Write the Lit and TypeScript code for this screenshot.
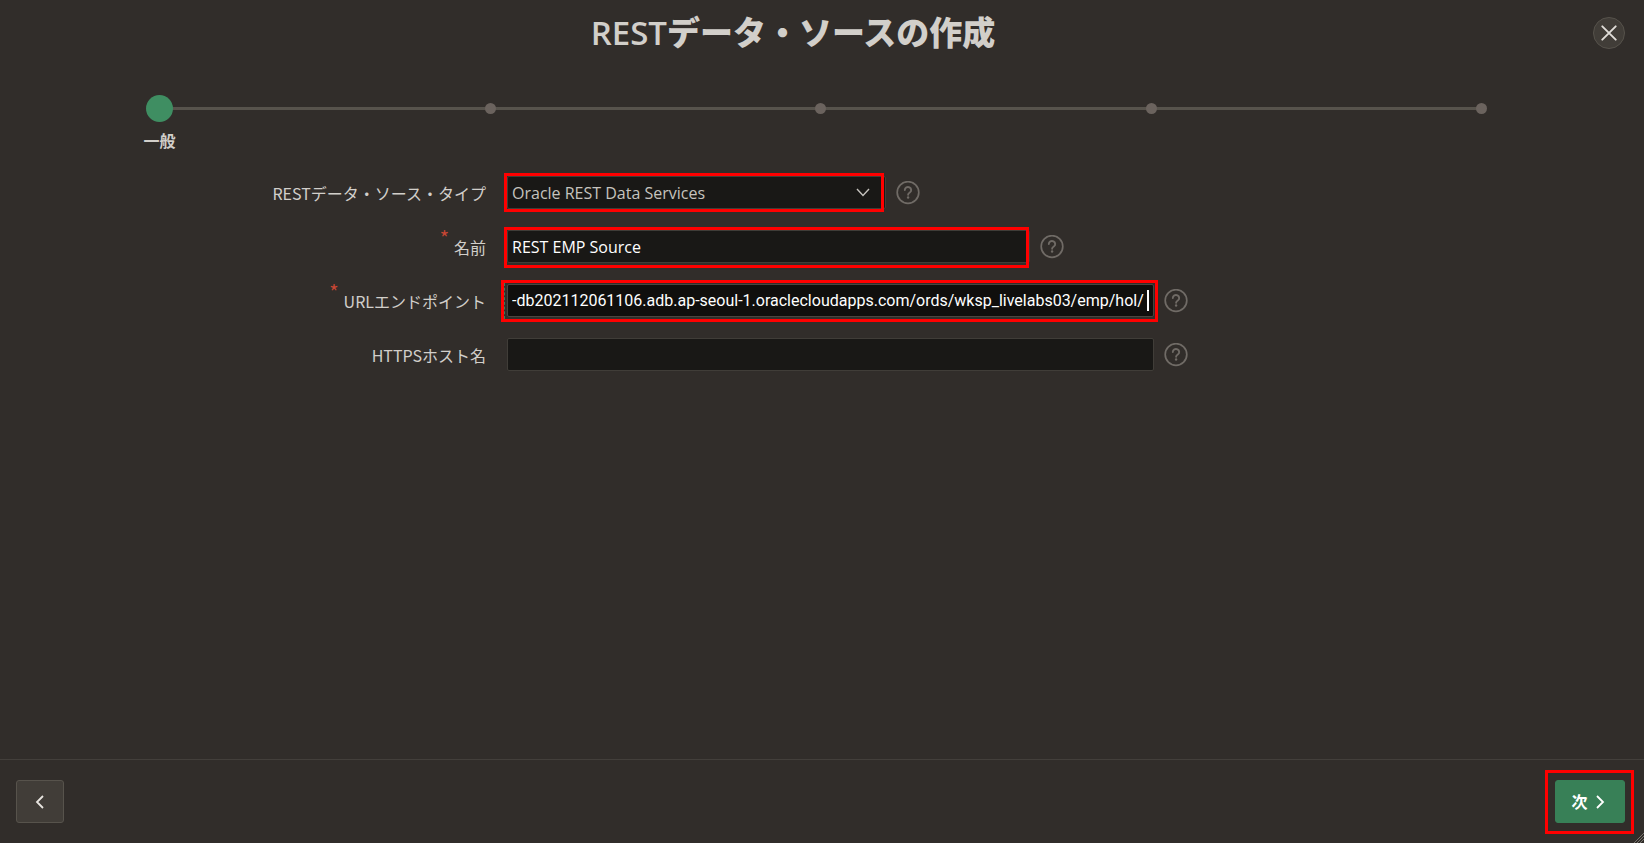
import { LitElement, html, css } from "lit";
import { customElement } from "lit/decorators.js";

@customElement("help-button")
class HelpButton extends LitElement {
  static styles = css`
    :host { display: block; flex: none; }
    .help { display: block; width: 24px; height: 24px; padding: 0; border: 0; background: none; color: #706b66; cursor: pointer; }
    .icon { display: block; }
  `;
  render() {
    return html`<button class="help" type="button" aria-label="ヘルプ">
      <svg class="icon" width="24" height="24" viewBox="0 0 24 24" fill="none" stroke="currentColor">
        <circle cx="12" cy="11.5" r="10.8" stroke-width="1.7" />
        <path d="M8.8 9a3.2 3 0 1 1 5 2.5c-1.1.7-1.7 1.1-1.7 2.3" stroke-width="1.9" stroke-linecap="round" />
        <circle cx="12.1" cy="16.5" r="1.2" fill="currentColor" stroke="none" />
      </svg>
    </button>`;
  }
}

@customElement("step-train")
class StepTrain extends LitElement {
  static styles = css`
    :host { display: block; }
    .train {
      display: flex; justify-content: space-between; margin: 0 149px 0 146px; padding: 0; list-style: none; height: 27px;
      background: linear-gradient(#57534c, #57534c) center / calc(100% - 27px) 3px no-repeat;
    }
    .step { display: grid; place-items: center; width: 27px; }
    .dot { width: 11px; height: 11px; border-radius: 50%; background: #6b635e; }
    .current { width: 27px; height: 27px; background: #3f8e62; }
    .label { width: 319px; margin-top: 7px; text-align: center; font-weight: 700; line-height: 24px; }
  `;
  render() {
    return html`<ol class="train">
        <li class="step" aria-current="step"><span class="dot current"></span></li>
        ${[1, 2, 3, 4].map(() => html`<li class="step"><span class="dot"></span></li>`)}
      </ol>
      <div class="label">一般</div>`;
  }
}

@customElement("app-root")
class AppRoot extends LitElement {
  static styles = css`
    :host {
      display: flex; flex-direction: column; min-height: 100vh; box-sizing: border-box; position: relative;
      background: #312d2a; color: #d2cfca;
      font-family: "Open Sans", "Noto Sans CJK JP", sans-serif; font-size: 16px; line-height: 24px;
    }
    .header { display: flex; align-items: center; gap: 23px; padding: 9px 19px 0 16px; height: 48px; }
    .title { flex: 1; margin: 0; text-align: center; font-size: 33px; line-height: 40px; font-weight: 900; }
    .latin { font-weight: 600; }
    .close { flex: none; display: grid; place-items: center; width: 32px; height: 32px; padding: 0; border: 1px solid #56524b; border-radius: 50%; background: #413d38; color: #e0ddd8; }
    .train { margin-top: 38px; }
    .form { display: grid; gap: 21px; margin-top: 23px; flex: 1; align-content: start; }
    .row { display: grid; grid-template-columns: 486px 1fr; column-gap: 21px; align-items: center; }
    .caption { justify-self: end; display: flex; font-family: "Noto Sans CJK JP", sans-serif; }
    .required { color: #c74634; margin: -9px 5px 0 0; font-size: 20px; }
    .cell { display: flex; align-items: center; gap: 10px; }
    .field { position: relative; display: flex; color: #fff; }
    .control { box-sizing: border-box; width: 100%; height: 33px; padding: 0 4px; border: 1px solid #403d38; border-radius: 2px; background: #191816; color: #fff; font: inherit; appearance: none; outline: 0; }
    .choice { width: 379px; color: #c6c3be; }
    .medium { width: 523px; }
    .wide { width: 647px; }
    .active { background: #100f0d; border-color: #4a4640; font-family: Roboto, sans-serif; }
    .wide::before { content: none; }
    .mark-url::before { content: ""; position: absolute; inset: -1px auto -2px -3px; border-left: 1px dashed #3c7a58; }
    .caret { position: absolute; right: 5px; top: 6px; width: 2px; height: 21px; background: #fff; }
    .arrow { position: absolute; right: 16px; top: 12px; color: #c6c3be; pointer-events: none; }
    .marked { position: relative; }
    .marked::after { content: ""; position: absolute; border: 3px solid #ff0000; pointer-events: none; }
    .mark-type::after { inset: -3px 2px -3px -3px; }
    .mark-name::after { inset: -3px 1px -5px -3px; }
    .mark-url::after { inset: -4px -4px -5px -6px; }
    .mark-next::after { inset: -10px -9px -11px -10px; }
    .footer { display: flex; justify-content: space-between; padding: 20px 19px 20px 16px; border-top: 1px solid #433f3b; }
    .button { display: flex; align-items: center; justify-content: center; height: 43px; box-sizing: border-box; border-radius: 3px; border: 1px solid #57534c; background: #413d38; color: #e8e5e0; font: inherit; font-weight: 700; padding: 0; }
    .back { width: 48px; }
    .next { width: 70px; gap: 8px; border-color: #388057; background: #388057; color: #fff; padding-right: 4px; }
    .grip { position: absolute; right: 0; bottom: 0; color: #77736d; }
  `;

  render() {
    return html`
      <header class="header">
        <h1 class="title"><span class="latin">REST</span>データ・ソースの作成</h1>
        <button class="close" type="button" aria-label="閉じる">
          <svg width="16" height="16" viewBox="0 0 16 16" fill="none" stroke="currentColor" stroke-width="1.9" stroke-linecap="round"><path d="M1.3 1.3l13.4 13.4M14.7 1.3L1.3 14.7" /></svg>
        </button>
      </header>
      <step-train class="train"></step-train>
      <form class="form">
        <div class="row">
          <label class="caption" for="type">RESTデータ・ソース・タイプ</label>
          <div class="cell">
            <div class="field choice marked mark-type">
              <select class="control choice" id="type"><option>Oracle REST Data Services</option></select>
              <svg class="arrow" width="14" height="9" viewBox="0 0 14 9" fill="none" stroke="currentColor" stroke-width="1.4"><path d="M1 1l6 6.4L13 1" /></svg>
            </div>
            <help-button></help-button>
          </div>
        </div>
        <div class="row">
          <label class="caption" for="name"><span class="required">*</span>名前</label>
          <div class="cell">
            <div class="field medium marked mark-name"><input class="control" id="name" value="REST EMP Source" /></div>
            <help-button></help-button>
          </div>
        </div>
        <div class="row">
          <label class="caption" for="url"><span class="required">*</span>URLエンドポイント</label>
          <div class="cell">
            <div class="field wide marked mark-url"><input class="control active" id="url" value="-db202112061106.adb.ap-seoul-1.oraclecloudapps.com/ords/wksp_livelabs03/emp/hol/" /><span class="caret"></span></div>
            <help-button></help-button>
          </div>
        </div>
        <div class="row">
          <label class="caption" for="host">HTTPSホスト名</label>
          <div class="cell">
            <div class="field wide"><input class="control" id="host" /></div>
            <help-button></help-button>
          </div>
        </div>
      </form>
      <footer class="footer">
        <button class="button back" type="button" aria-label="戻る">
          <svg width="10" height="14" viewBox="0 0 10 14" fill="none" stroke="currentColor" stroke-width="1.8"><path d="M8 1L2 7l6 6" /></svg>
        </button>
        <div class="marked mark-next">
          <button class="button next" type="button">次<svg width="9" height="14" viewBox="0 0 9 14" fill="none" stroke="currentColor" stroke-width="1.8"><path d="M1 1l6 6-6 6" /></svg></button>
        </div>
      </footer>
      <svg class="grip" width="10" height="10" viewBox="0 0 10 10" fill="none" stroke="currentColor" stroke-width="1"><path d="M0 10L10 0M3 10l7-7M6 10l4-4" /></svg>
    `;
  }
}
